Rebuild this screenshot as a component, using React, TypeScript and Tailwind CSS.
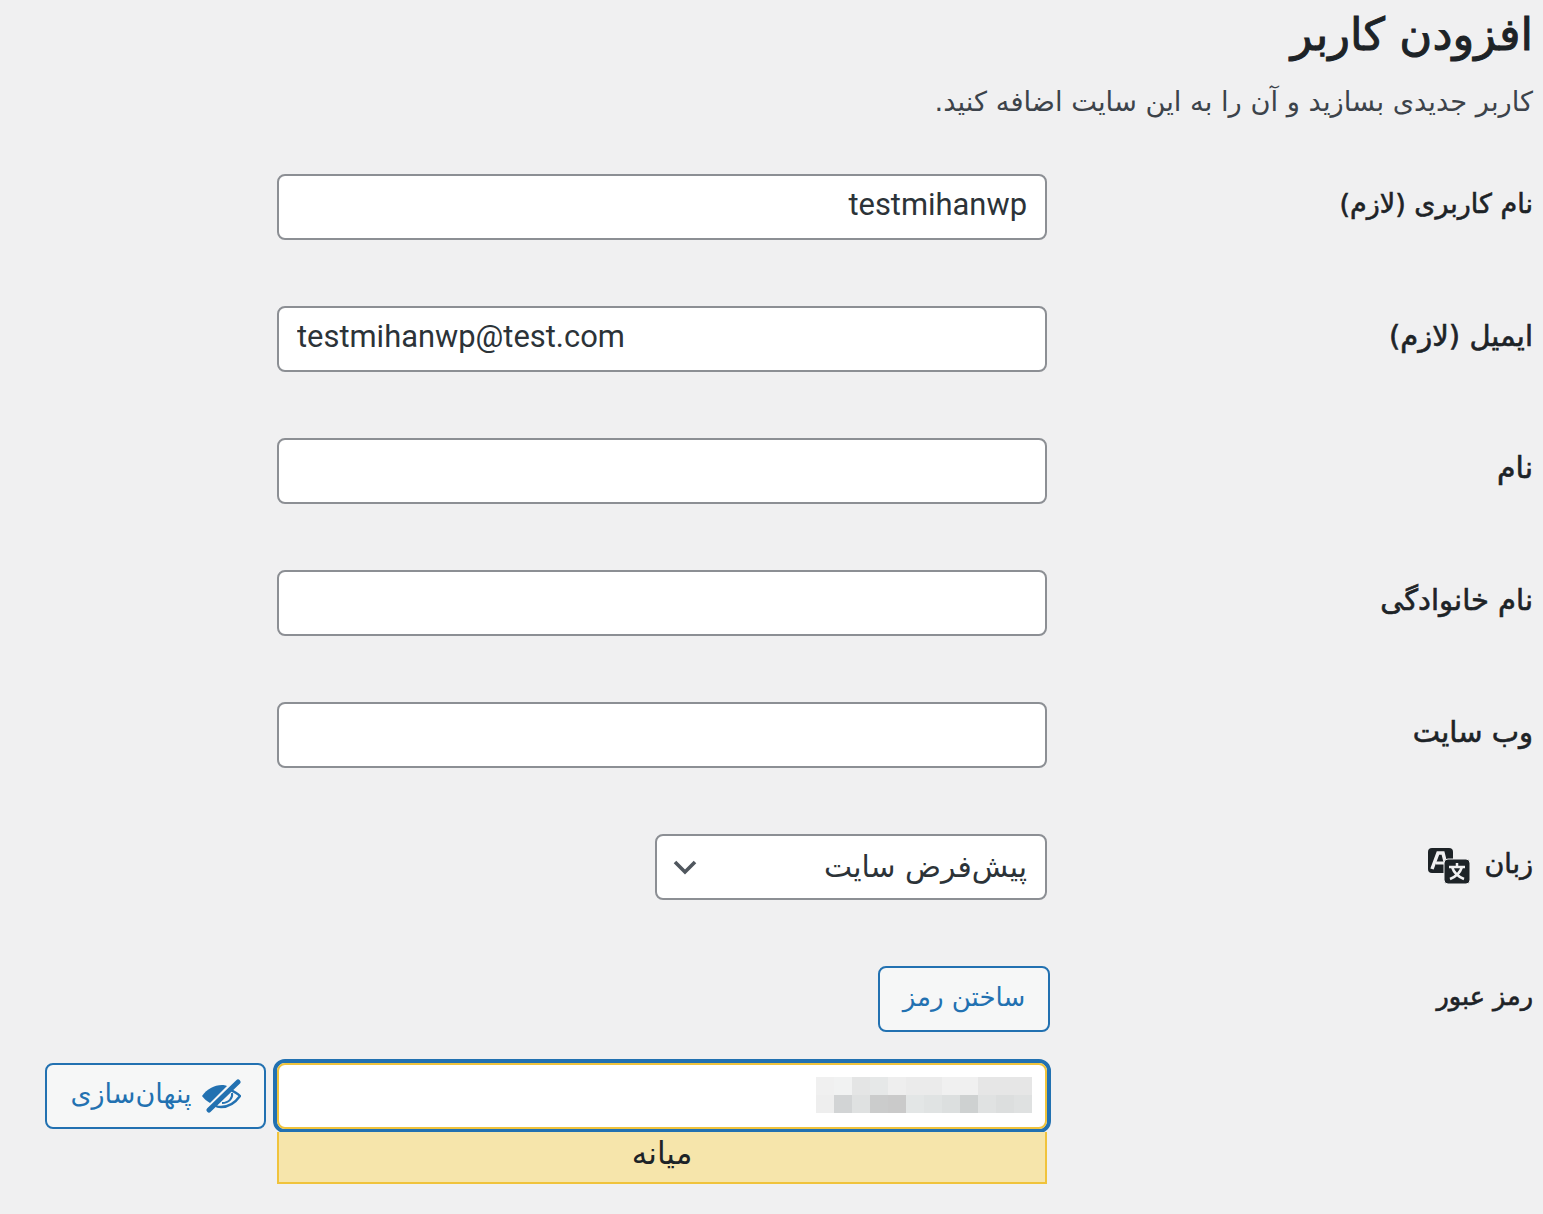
const PIXELS = [
  ["#f0f0f0", "#f1f2f2", "#e4e5e5", "#e6e8e8", "#eeeeee", "#ebebeb", "#ebebeb", "#f0f0f0", "#f0f0f0", "#e6e6e6", "#e6e6e6", "#e6e6e6"],
  ["#eeeeee", "#d2d4d5", "#dfe1e1", "#cbcccc", "#cacaca", "#e3e6e6", "#e0e3e3", "#dcdfdf", "#ced1d1", "#e0e2e2", "#dcdede", "#dfe1e1"],
]

function Field({ value, left }: { value?: string; left?: boolean }) {
  return (
    <input
      readOnly
      value={value ?? ""}
      dir={left ? "ltr" : "rtl"}
      className="w-[770px] h-[66px] rounded-lg border-2 border-[#8c8f94] bg-white px-[18px] pb-[6px] text-[30.9px] text-[#2c3338] outline-none font-['Roboto',sans-serif]"
    />
  )
}

function Row({ label, size, icon, children }: { label: string; size: string; icon?: boolean; children: React.ReactNode }) {
  return (
    <div className="flex items-start h-[132px]">
      <div className={`w-[486px] pt-[8px] flex items-center gap-[13px] leading-[44px] [-webkit-text-stroke:0.6px] text-[#1d2327] ${size}`}>
        {label}
        {icon && <TranslationIcon />}
      </div>
      {children}
    </div>
  )
}

function TranslationIcon() {
  return (
    <svg width="44" height="38" viewBox="0 0 44 38" className="mt-1">
      <rect x="1" y="1" width="25" height="25" rx="4" fill="#1d2327" />
      <path d="M5 22 11 6h5l4 16" fill="none" stroke="#f0f0f1" strokeWidth="3.5" />
      <path d="M9 16h8" stroke="#f0f0f1" strokeWidth="3" />
      <rect x="17" y="12" width="26" height="25" rx="4" fill="#1d2327" stroke="#f0f0f1" strokeWidth="1" />
      <path d="M22 20h16M30 16v4M25 20c2 6 7 10 12 12M35 20c-2 6-7 10-12 12" fill="none" stroke="#f0f0f1" strokeWidth="2.5" />
    </svg>
  )
}

function EyeHidden() {
  return (
    <svg width="40" height="34" viewBox="0 0 40 34" fill="none">
      <path d="M1 17C6 10 13 6 21 6c2 0 3 0 5 1L9 24C6 22 3 20 1 17Z" fill="#2271b1" />
      <path d="M28 10c4 2 8 4 11 7-5 7-11 11-19 11-2 0-4 0-5-1" stroke="#2271b1" strokeWidth="2.4" />
      <path d="M31 14c1 5-3 10-10 10" stroke="#2271b1" strokeWidth="2" />
      <path d="M8 31 37 3" stroke="#2271b1" strokeWidth="5" strokeLinecap="round" />
    </svg>
  )
}

export default function App() {
  return (
    <div dir="rtl" className="min-h-[1214px] bg-[#f0f0f1] pr-[10px] text-[#1d2327] font-['DejaVu_Sans',sans-serif] overflow-hidden">
      <h1 className="pt-[5px] text-[45px] leading-[60px] font-normal [-webkit-text-stroke:1px] text-[#1d2327]">افزودن کاربر</h1>
      <p className="mt-[17px] h-[92px] text-[27.3px] leading-[40px] text-[#3c434a]">کاربر جدیدی بسازید و آن را به این سایت اضافه کنید.</p>

      <Row label="نام کاربری (لازم)" size="text-[27px]">
        <Field value="testmihanwp" />
      </Row>
      <Row label="ایمیل (لازم)" size="text-[29px]">
        <Field value="testmihanwp@test.com" left />
      </Row>
      <Row label="نام" size="text-[30px]">
        <Field />
      </Row>
      <Row label="نام خانوادگی" size="text-[29px]">
        <Field />
      </Row>
      <Row label="وب سایت" size="text-[29px]">
        <Field />
      </Row>
      <Row label="زبان" size="text-[27px]" icon>
        <div className="w-[392px] h-[66px] rounded-lg border-2 border-[#8c8f94] bg-white pr-[18px] pl-[16px] flex items-center justify-between text-[29.8px] text-[#2c3338]">
          <span>پیش‌فرض سایت</span>
          <svg width="24" height="16" viewBox="0 0 24 16" fill="none">
            <path d="M2 3l10 10L22 3" stroke="#50575e" strokeWidth="3.6" />
          </svg>
        </div>
      </Row>

      <div className="flex items-start">
        <div className="w-[482px] pt-[8px] text-[25.5px] leading-[44px] [-webkit-text-stroke:0.6px]">رمز عبور</div>
        <div>
          <button className="mr-px w-[172px] h-[66px] rounded-lg border-2 border-[#2271b1] bg-[#f6f7f7] pb-1 text-[26px] text-[#2271b1]">ساختن رمز</button>
          <div className="mt-[27px] flex items-start gap-[7px]">
            <div>
              <div className="w-[778px] h-[74px] rounded-[12px] border-[4px] border-[#2271b1] bg-white">
                <div className="h-full rounded-lg border-2 border-[#f0c33c] pr-[13px] pt-[12px]">
                  <div dir="ltr" className="w-[216px]">
                    {PIXELS.map((row, r) => (
                      <div key={r} className="flex h-[18px]">
                        {row.map((c, i) => (
                          <div key={i} className="w-[18px] shrink-0" style={{ backgroundColor: c }} />
                        ))}
                      </div>
                    ))}
                  </div>
                </div>
              </div>
              <div className="mr-[4px] -mt-[1px] w-[770px] h-[52px] border-2 border-t-0 border-[#f0c33c] bg-[#f6e5ab] text-center text-[31px] leading-[42px] text-[#1d2327]">میانه</div>
            </div>
            <button className="mt-[4px] w-[221px] h-[66px] rounded-lg border-2 border-[#2271b1] bg-[#f6f7f7] flex items-center justify-center gap-[9px] text-[27px] text-[#2271b1]">
              <EyeHidden />
              <span className="pb-1">پنهان‌سازی</span>
            </button>
          </div>
        </div>
      </div>
    </div>
  )
}
